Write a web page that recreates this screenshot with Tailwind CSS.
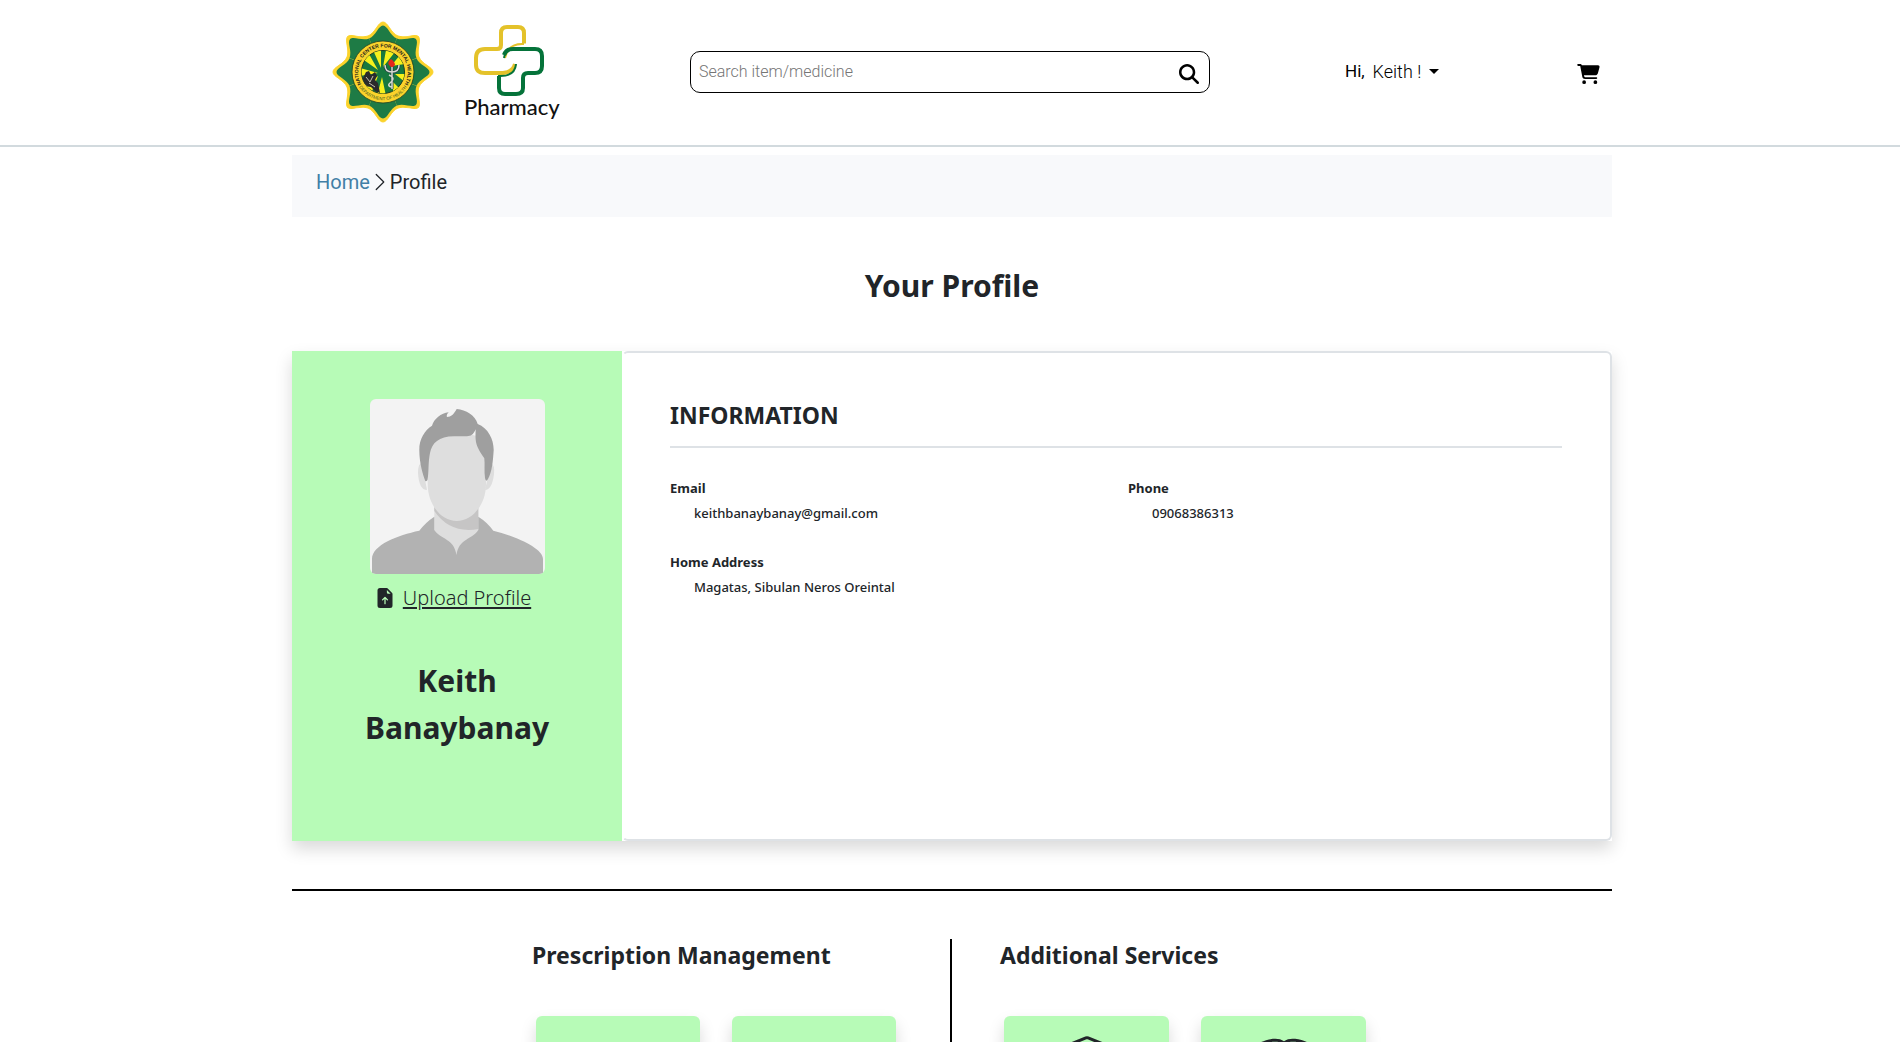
<!DOCTYPE html>
<html lang="en">
<head>
<meta charset="utf-8">
<meta name="viewport" content="width=device-width, initial-scale=1">
<title>Your Profile - Pharmacy</title>
<script src="https://cdn.jsdelivr.net/npm/@tailwindcss/browser@4"></script>
</head>
<body class="h-screen overflow-x-hidden bg-white font-['Noto_Sans',sans-serif] text-[#212529]">
<header class="border-b-2 border-[#d2dade] pl-1 font-[Roboto,sans-serif]">
  <div class="mx-auto grid h-[145px] max-w-[1320px] grid-cols-[398fr_520fr_402fr] items-center pb-[2px]">
    <a href="#" class="flex items-center gap-[30px] pl-10" aria-label="Pharmacy home">
      <svg class="size-[102px]" viewBox="-51 -51 102 102" aria-hidden="true">
        <defs>
          <path id="lobe" d="M0 0L-14.9-36C-7.500-39.100-5-50 0-50S7.500-39.100 14.900-36Z"/>
          <g id="star"><use href="#lobe"/><use href="#lobe" transform="rotate(45)"/><use href="#lobe" transform="rotate(90)"/><use href="#lobe" transform="rotate(135)"/><use href="#lobe" transform="rotate(180)"/><use href="#lobe" transform="rotate(225)"/><use href="#lobe" transform="rotate(270)"/><use href="#lobe" transform="rotate(315)"/></g>
          <path id="arcTop" d="M-20.500 14A24.800 24.800 0 1 1 20.500 14"/>
          <path id="arcBottom" d="M-25 13A28.200 28.200 0 0 0 25 13"/>
          <clipPath id="disc"><circle r="21.500"/></clipPath>
        </defs>
        <use href="#star" fill="#fbd32b" stroke="#fbd32b"/>
        <use href="#star" fill="#1e7b45" transform="scale(.93)"/>
        <circle r="31" fill="#fbd32b" stroke="#1c3d22" stroke-width=".8"/>
        <circle r="21.500" fill="#17793f" stroke="#1c3d22"/>
        <g clip-path="url(#disc)">
          <path fill="#f6f01c" d="M-2-4L-10-22-2-22ZM0-5L3-22 12-20ZM-5-2L-22-14-14-18ZM-5 1L-23 4-23-4ZM8-6L17-17 22-8ZM12 2L23 2 22 10ZM10 10L16 16 10 22ZM-1 5L3 24-6 24ZM-5 4L-12 22-20 14Z"/>
          <path fill="#2b2b2b" d="M-20 6l3-6 3-1 2 4 4-3 2 4-2 4 3 3 2 10-5-2-4-4-7-1Z"/>
          <path fill="none" stroke="#c9c4b4" d="M-17 5l4 5 3-6M-14 11l6 4"/>
          <path fill="none" stroke="#244" stroke-width="3" d="M9-6V17M2-7Q2 0 9 0T16-7"/>
          <path fill="none" stroke="#d4d8d0" stroke-width="1.500" d="M9-6V17M2-7Q2 0 9 0T16-7M6 3Q13 6 8 10T9 15"/>
          <path fill="#e3261b" d="M6-7Q4-10 8-13 12-10 12-7L10-5H8Z"/>
        </g>
        <text fill="#1c1c1c" font-family="Liberation Sans, sans-serif" font-weight="700" font-size="5" text-anchor="middle"><textPath href="#arcTop" startOffset="50%">NATIONAL CENTER FOR MENTAL HEALTH</textPath></text>
        <text fill="#3b5a25" font-family="Liberation Sans, sans-serif" font-size="4.500" text-anchor="middle"><textPath href="#arcBottom" startOffset="50%">DEPARTMENT OF HEALTH</textPath></text>
      </svg>
      <svg class="h-24 w-[96px]" viewBox="0 0 96 96" aria-hidden="true">
        <g fill="none" stroke-width="4">
          <path stroke="#e4c22a" d="M60 19.500V9q0-6-6-6H43q-6 0-6 6v12q0 4-4 4H21q-9 0-9 9v7q0 8 9 8h18q10-1 12-9"/>
          <path stroke="#e4c22a" stroke-width="2" d="M60 20q-16-1-19 14"/>
          <path stroke="#05733a" d="M40 31q2-6 9-6h22q7 0 7 7v10q0 7-7 7H64q-5 0-5 5v10q0 6-7 6H41q-6 0-6-6V52"/>
          <path stroke="#05733a" stroke-width="2" d="M40 34q1-7 8-9M34 52q17 1 18-12"/>
        </g>
        <text x="0" y="91" fill="#111" font-family="Lato, sans-serif" font-size="22" font-weight="500">Pharmacy</text>
      </svg>
    </a>
    <form class="flex h-[42px] items-center rounded-[10px] border border-black pr-[10px] pl-2">
      <input type="search" aria-label="Search item or medicine" placeholder="Search item/medicine" class="min-w-0 grow font-light outline-none placeholder:text-[#757575]">
      <button type="button" aria-label="Search"><svg class="mt-1 size-5" viewBox="0 0 512 512"><path d="M416 208c0 45.900-14.900 88.300-40 122.700L502.600 457.400c12.500 12.500 12.500 32.800 0 45.300s-32.800 12.500-45.300 0L330.700 376c-34.400 25.200-76.800 40-122.700 40C93.100 416 0 322.900 0 208S93.100 0 208 0S416 93.100 416 208zM208 352a144 144 0 1 0 0-288 144 144 0 1 0 0 288z"/></svg></button>
    </form>
    <div class="flex items-center justify-between pr-3 pl-[135px]">
      <div class="flex items-center gap-2 text-[17px] text-black">
        <span>Hi,</span>
        <button type="button" class="flex items-center gap-2 text-[18px] font-light">Keith ! <svg class="h-[5px] w-[10px]" viewBox="0 0 10 5"><path d="M0 0H10L5 5Z"/></svg></button>
      </div>
      <a href="#" aria-label="Cart"><svg class="mt-1 h-5 w-[23px]" viewBox="0 0 576 512"><path d="M24 0C10.700 0 0 10.700 0 24S10.700 48 24 48h45.500c3.800 0 7.100 2.700 7.900 6.500l51.600 271c6.500 34 36.200 58.500 70.700 58.500H488c13.300 0 24-10.700 24-24s-10.700-24-24-24H199.700c-11.500 0-21.400-8.200-23.600-19.500L170.700 288h288.500c32.600 0 61.100-21.800 69.500-53.300l41-152.300C576.600 57 557.400 32 531.100 32H360 120.100C111 12.800 91.600 0 69.500 0H24zM176 512a48 48 0 1 0 0-96 48 48 0 1 0 0 96zm336-48a48 48 0 1 0-96 0 48 48 0 1 0 96 0z"/></svg></a>
    </div>
  </div>
</header>

<main class="pl-1">
  <div class="mx-auto max-w-[1320px] pt-2">
    <nav aria-label="Breadcrumb" class="flex h-[62px] items-start bg-[#f8f9fb] px-6 pt-3 font-[Roboto,sans-serif] text-[20px] leading-[30px]">
      <a href="#" class="text-[#427fa6]">Home</a>
      <svg class="mt-[5px] size-5 text-[#212529]" viewBox="0 0 16 16" fill="currentColor" aria-hidden="true"><path d="M4.646 1.646a.5.500 0 0 1 .708 0l6 6a.5.500 0 0 1 0 .708l-6 6a.5.500 0 0 1-.708-.708L10.293 8 4.646 2.354a.5.500 0 0 1 0-.708"/></svg>
      <span>Profile</span>
    </nav>

    <h1 class="mt-[50px] text-center text-[30px] leading-[38px] font-bold">Your Profile</h1>

    <section class="mt-[46px] grid min-h-[490px] grid-cols-[1fr_3fr] shadow-[0_8px_16px_rgba(0,0,0,0.15)]">
      <div class="flex flex-col items-center bg-[#b7fbb7] px-12 pt-12">
        <svg class="size-[175px] rounded-md" viewBox="0 0 175 175" role="img" aria-label="Profile picture">
          <path fill="#f3f3f3" d="M0 0H175V175H0Z"/>
          <path fill="#dedede" d="M64.300 100H108.300V135L86.700 160 64.300 135Z"/>
          <path fill="#c6c5c5" d="M64.300 108Q86 128 108.300 108V130Q80 135 64.300 112Z"/>
          <path fill="#dedede" d="M52 64Q48 64 48 74 49 91 57 91ZM121 64Q125 66 124 75 122 91 115 91Z"/>
          <path fill="#dedede" d="M57.700 50Q60 34 87 34T116 50V85C116 106 102 122 86.700 122S57.700 106 57.700 85Z"/>
          <path fill="#9f9f9f" d="M55.300 82C53 76 49.300 64 49.300 51 49 40 55 31 62 26.700 64 20 71 14 78.700 13.300Q76 16 77 18C81 18 84 15 86.700 10 96 11 105 16 107.700 25 118 29 123.700 40 123.700 51 123 62 122 73 118 80Q116 84 115 79C114 72 115 65 114.300 59.300 106 47 105 44 105.700 30.300 103 36 101 37 97 37.300H85C69 37 62 44 60 54 58 63 59 73 57.500 81Q56 83 55.300 82Z"/>
          <path fill="#b2b2b2" d="M2 175V160C2 146 28 136 49.300 131.700Q56 123 64.300 117.700V131C71 141 84 139 86.500 156 89 139 102 141 108.300 131V117.700Q117 123 123.300 131.700C145 137 173 149 173 160V175Z"/>
        </svg>
        <button type="button" class="mt-2 flex items-center gap-2 pr-2 text-[20px] leading-8 font-light">
          <svg class="size-5" viewBox="0 0 16 16" fill="currentColor" aria-hidden="true"><path d="M9.293 0H4a2 2 0 0 0-2 2v12a2 2 0 0 0 2 2h8a2 2 0 0 0 2-2V4.707A1 1 0 0 0 13.707 4L10 .293A1 1 0 0 0 9.293 0M9.500 3.500v-2l3 3h-2a1 1 0 0 1-1-1M6.354 9.854a.5.500 0 0 1-.708-.708l2-2a.5.500 0 0 1 .708 0l2 2a.5.500 0 0 1-.708.708L8.500 8.707V12.500a.5.500 0 0 1-1 0V8.707z"/></svg>
          <span class="underline decoration-2 underline-offset-2">Upload Profile</span>
        </button>
        <h2 class="mt-[43px] text-center text-[30px] leading-[47px] font-bold">Keith<br>Banaybanay</h2>
      </div>
      <div class="rounded-md border-2 border-[#dee2e6] border-l-transparent px-12 pt-12 pl-[46px]">
        <h2 class="border-b-2 border-[#dee2e6] pb-4 text-[23px] leading-[29px] font-bold">INFORMATION</h2>
        <dl class="mt-8 grid grid-cols-2 gap-x-6 gap-y-8 text-[13px] leading-[17px]">
          <div><dt class="font-bold">Email</dt><dd class="mt-2 pl-6 font-medium">keithbanaybanay@gmail.com</dd></div>
          <div><dt class="font-bold">Phone</dt><dd class="mt-2 pl-6 font-medium">09068386313</dd></div>
          <div><dt class="font-bold">Home Address</dt><dd class="mt-2 pl-6 font-medium">Magatas, Sibulan Neros Oreintal</dd></div>
        </dl>
      </div>
    </section>

    <hr class="mt-12 border-t-2 border-black">

    <div class="mt-12 grid grid-cols-[658fr_2fr_660fr]">
      <section class="flex flex-col items-end pr-[54px]">
        <div class="w-[364px]">
          <h2 class="pt-[2px] text-[23px] leading-[29px] font-bold whitespace-nowrap">Prescription Management</h2>
          <div class="mt-[46px] flex gap-8 pl-1">
            <a href="#" class="h-40 grow rounded-md bg-[#b7fbb7] shadow-[0_8px_16px_rgba(0,0,0,0.15)]" aria-label="Prescriptions"></a>
            <a href="#" class="h-40 grow rounded-md bg-[#b7fbb7] shadow-[0_8px_16px_rgba(0,0,0,0.15)]" aria-label="Prescription history"></a>
          </div>
        </div>
      </section>
      <div class="bg-black"></div>
      <section class="pl-12">
        <h2 class="pt-[2px] text-[23px] leading-[29px] font-bold">Additional Services</h2>
        <div class="mt-[46px] flex gap-8 pl-1">
          <a href="#" class="flex h-40 w-[165px] justify-center rounded-md bg-[#b7fbb7] pt-5 shadow-[0_8px_16px_rgba(0,0,0,0.15)]" aria-label="Orders"><svg class="size-12" viewBox="0 0 16 16" fill="currentColor"><path d="M8.186 1.113a.5.500 0 0 0-.372 0L1.846 3.500l2.404.961L10.404 2zm3.564 1.426L5.596 5 8 5.961 14.154 3.500zm3.250 1.700-6.500 2.600v7.922l6.500-2.600V4.240zM7.500 14.762V6.838L1 4.239v7.923zM7.443.184a1.500 1.500 0 0 1 1.114 0l7.129 2.852A.5.500 0 0 1 16 3.500v8.662a1 1 0 0 1-.629.928l-7.185 2.874a.5.500 0 0 1-.372 0L.63 13.090a1 1 0 0 1-.63-.928V3.500a.5.500 0 0 1 .314-.464z"/></svg></a>
          <a href="#" class="flex h-40 w-[165px] justify-center rounded-md bg-[#b7fbb7] pt-5 shadow-[0_8px_16px_rgba(0,0,0,0.15)]" aria-label="Guide"><svg class="size-12" viewBox="0 0 16 16" fill="currentColor"><path d="M1 2.828c.885-.37 2.154-.769 3.388-.893 1.330-.134 2.458.063 3.112.752v9.746c-.935-.53-2.120-.603-3.213-.493-1.180.12-2.370.461-3.287.811zm7.500-.141c.654-.689 1.782-.886 3.112-.752 1.234.124 2.503.523 3.388.893v9.923c-.918-.35-2.107-.692-3.287-.81-1.094-.111-2.278-.039-3.213.492zM8 1.783C7.015.936 5.587.81 4.287.94c-1.514.153-3.042.672-3.994 1.105A.5.500 0 0 0 0 2.500v11a.5.500 0 0 0 .707.455c.882-.4 2.303-.881 3.680-1.020 1.409-.142 2.590.087 3.223.877a.5.500 0 0 0 .78 0c.633-.79 1.814-1.019 3.222-.877 1.378.139 2.800.62 3.681 1.020A.5.500 0 0 0 16 13.500v-11a.5.500 0 0 0-.293-.455c-.952-.433-2.480-.952-3.994-1.105C10.413.809 8.985.936 8 1.783"/></svg></a>
        </div>
      </section>
    </div>
  </div>
</main>
</body>
</html>
